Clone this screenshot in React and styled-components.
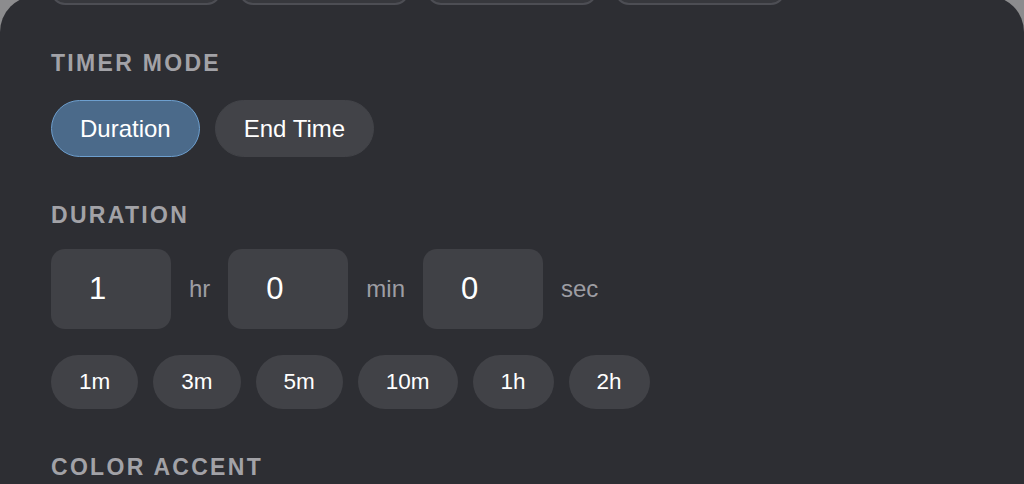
import React, { useState } from "react";
import styled, { createGlobalStyle } from "styled-components";

const GlobalStyle = createGlobalStyle`
    html, body {
        margin: 0;
        padding: 0;
        background: #8c8c8e;
        font-family: "Liberation Sans", Arial, sans-serif;
    }
    * { box-sizing: border-box; }
`;

// 바깥 회색 배경 위에 패널이 떠 있는 형태
const Page = styled.div`
    width: 1024px;
    height: 484px;
    overflow: hidden;
`;

const Panel = styled.div`
    margin-top: -4px;
    width: 1024px;
    height: 492px;
    background: #2d2e33;
    border-radius: 36px 36px 0 0;
    overflow: hidden;
`;

// 스크롤된 상태라 위쪽 내용이 잘려 보임
const Scroller = styled.div`
    margin-top: -39px;
    padding: 0 51px;
    display: flex;
    flex-direction: column;
`;

const TopRow = styled.div`
    display: grid;
    grid-template-columns: repeat(4, 170px);
    gap: 18px;
`;

const TopButton = styled.div`
    height: 48px;
    border-radius: 14px;
    background: #37383d;
    border: 2px solid #4d4e54;
`;

const Section = styled.section`
    margin-top: 47px;
    display: flex;
    flex-direction: column;
`;

const Label = styled.h3`
    margin: 0;
    font-size: 23px;
    line-height: 1;
    font-weight: 700;
    letter-spacing: 2.3px;
    text-transform: uppercase;
    color: #a2a2a7;
`;

const Row = styled.div`
    display: flex;
    align-items: center;
    gap: ${props => props.gap || 15}px;
    margin-top: ${props => props.top || 25}px;
`;

const ModeButton = styled.button`
    height: 57px;
    padding: 0 28px;
    border-radius: 999px;
    font-family: inherit;
    font-size: 24px;
    color: #ffffff;
    background: ${props => (props.active ? "#4b6a8a" : "#424348")};
    border: 1px solid ${props => (props.active ? "#6d9fcf" : "#424348")};
    cursor: pointer;
`;

const TimeBox = styled.div`
    width: 120px;
    height: 80px;
    border-radius: 14px;
    background: #404146;
    display: flex;
    align-items: center;
    padding-left: 38px;
    font-size: 31px;
    color: #ffffff;
`;

const Unit = styled.span`
    font-size: 24px;
    color: #9d9da3;
`;

const Chip = styled.button`
    height: 54px;
    padding: 0 28px;
    border-radius: 999px;
    border: 0;
    background: #414247;
    font-family: inherit;
    font-size: 22.5px;
    color: #ffffff;
    cursor: pointer;
`;

const presets = ["1m", "3m", "5m", "10m", "1h", "2h"];

export default function App() {
    const [mode, setMode] = useState("duration");
    const time = { hr: 1, min: 0, sec: 0 };

    return (
        <Page>
            <GlobalStyle />
            <Panel>
                <Scroller>
                    <TopRow>
                        <TopButton />
                        <TopButton />
                        <TopButton />
                        <TopButton />
                    </TopRow>

                    <Section>
                        <Label>Timer Mode</Label>
                        <Row>
                            <ModeButton active={mode === "duration"} onClick={() => setMode("duration")}>
                                Duration
                            </ModeButton>
                            <ModeButton active={mode === "end"} onClick={() => setMode("end")}>
                                End Time
                            </ModeButton>
                        </Row>
                    </Section>

                    <Section>
                        <Label>Duration</Label>
                        <Row gap={18} top={22}>
                            {Object.entries(time).map(([unit, value]) => (
                                <React.Fragment key={unit}>
                                    <TimeBox>{value}</TimeBox>
                                    <Unit>{unit}</Unit>
                                </React.Fragment>
                            ))}
                        </Row>
                        <Row top={26}>
                            {presets.map(p => (
                                <Chip key={p}>{p}</Chip>
                            ))}
                        </Row>
                    </Section>

                    <Section>
                        <Label>Color Accent</Label>
                    </Section>
                </Scroller>
            </Panel>
        </Page>
    );
}
